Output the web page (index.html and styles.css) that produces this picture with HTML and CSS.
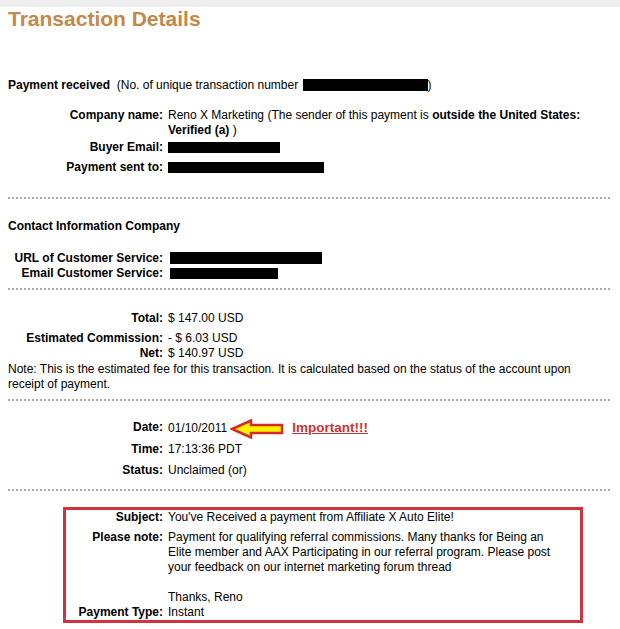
FILE: index.html
```html
<!DOCTYPE html>
<html lang="en">
<head>
  <meta charset="UTF-8" />
  <title>Transaction Details</title>
  <link rel="stylesheet" href="styles.css">
</head>
<body>
  <div class="topbar"></div>
  <div class="page">
    <h1 class="title">Transaction Details</h1>

    <p class="received"><b>Payment received</b>&nbsp; (No. of unique transaction number <span class="redact redact-txn"></span>)</p>

    <div class="fields fields-company">
      <div class="label">Company name:</div>
      <div class="value">Reno X Marketing (The sender of this payment is <b>outside the United States:<br>Verified (a)</b> )</div>
      <div class="label">Buyer Email:</div>
      <div class="value"><span class="redact redact-buyer"></span></div>
      <div class="label sent">Payment sent to:</div>
      <div class="value sent"><span class="redact redact-sent"></span></div>
    </div>

    <hr class="divider divider-company">

    <h3 class="section-title">Contact Information Company</h3>

    <div class="fields fields-contact">
      <div class="label">URL of Customer Service:</div>
      <div class="value"><span class="redact redact-url"></span></div>
      <div class="label">Email Customer Service:</div>
      <div class="value"><span class="redact redact-mail"></span></div>
    </div>

    <hr class="divider divider-contact">

    <div class="fields fields-amount">
      <div class="label total">Total:</div>
      <div class="value total">$ 147.00 USD</div>
      <div class="label">Estimated Commission:</div>
      <div class="value">- $ 6.03 USD</div>
      <div class="label">Net:</div>
      <div class="value">$ 140.97 USD</div>
    </div>
    <p class="fee-note">Note: This is the estimated fee for this transaction. It is calculated based on the status of the account upon<br>receipt of payment.</p>

    <hr class="divider divider-amount">

    <div class="fields fields-date">
      <div class="label">Date:</div>
      <div class="value">01/10/2011<svg class="arrow" width="54" height="20" viewBox="0 0 54 20"><polygon points="2,10 21,1.5 21,6 52,6 52,14 21,14 21,18.5" fill="#fff200" stroke="#d42a2a" stroke-width="2.5" stroke-linejoin="miter"/></svg><a class="important" href="#">Important!!!</a></div>
      <div class="label">Time:</div>
      <div class="value">17:13:36 PDT</div>
      <div class="label">Status:</div>
      <div class="value">Unclaimed (or)</div>
    </div>

    <hr class="divider divider-date">

    <div class="note-box">
      <div class="fields fields-box">
        <div class="label subject">Subject:</div>
        <div class="value subject">You've Received a payment from Affiliate X Auto Elite!</div>
        <div class="label">Please note:</div>
        <div class="value">Payment for qualifying referral commissions. Many thanks for Being an<br>Elite member and AAX Participating in our referral program. Please post<br>your feedback on our internet marketing forum thread<br><br>Thanks, Reno</div>
        <div class="label">Payment Type:</div>
        <div class="value">Instant</div>
      </div>
    </div>
  </div>
</body>
</html>
```

FILE: styles.css
```css
body {
  margin: 0;
  background: #fff;
  color: #000;
  font-family: "Liberation Sans", Arial, sans-serif;
  font-size: 12px;
  line-height: 15px;
}

.topbar {
  height: 7px;
  background-color: #eeeeee;
}

.page {
  padding: 0 10px 0 8px;
}

.title {
  margin: 0;
  font-size: 21px;
  line-height: 23px;
  font-weight: bold;
  color: #c3884c;
}

.received {
  margin: 48px 0 0;
}

.fields {
  display: grid;
  grid-template-columns: 155px 1fr;
  column-gap: 5px;
}

.label {
  font-weight: bold;
  text-align: right;
}

.fields-company {
  margin-top: 15px;
  row-gap: 2px;
}

.fields-company .sent {
  margin-top: 3px;
}

.section-title {
  margin: 20px 0 0;
  font-size: 12px;
  font-weight: bold;
}

.fields-contact {
  margin-top: 17px;
}

.fields-contact .value {
  padding-left: 2px;
}

.fields-amount {
  margin-top: 21px;
}

.fields-amount .total {
  margin-bottom: 5px;
}

.fee-note {
  margin: 1px 0 0;
}

.fields-date {
  margin-top: 19px;
  row-gap: 6px;
}

.arrow {
  margin: -3px 8px -3px 3px;
  vertical-align: middle;
}

.important {
  color: #cc3333;
  font-size: 13.5px;
  font-weight: bold;
  text-decoration: underline;
}

.divider {
  margin: 0;
  height: 0;
  border: none;
  border-top: 2px dotted #a8a8a8;
}

.divider-company {
  margin-top: 22px;
}

.divider-contact {
  margin-top: 7px;
}

.divider-amount {
  margin-top: 7px;
}

.divider-date {
  margin-top: 11px;
}

.note-box {
  margin: 16px 0 0 55px;
  width: 520px;
  box-sizing: border-box;
  border: 3px solid #d3313c;
}

.fields-box {
  grid-template-columns: 97px 1fr;
}

.fields-box .subject {
  margin-bottom: 5px;
}

.redact {
  display: inline-block;
  background: #000;
  vertical-align: -2px;
}

.redact-txn {
  width: 125px;
  height: 12px;
  margin-left: 1px;
}

.redact-buyer {
  width: 112px;
  height: 11px;
}

.redact-sent {
  width: 156px;
  height: 11px;
}

.redact-url {
  width: 152px;
  height: 12px;
}

.redact-mail {
  width: 108px;
  height: 11px;
}
```
